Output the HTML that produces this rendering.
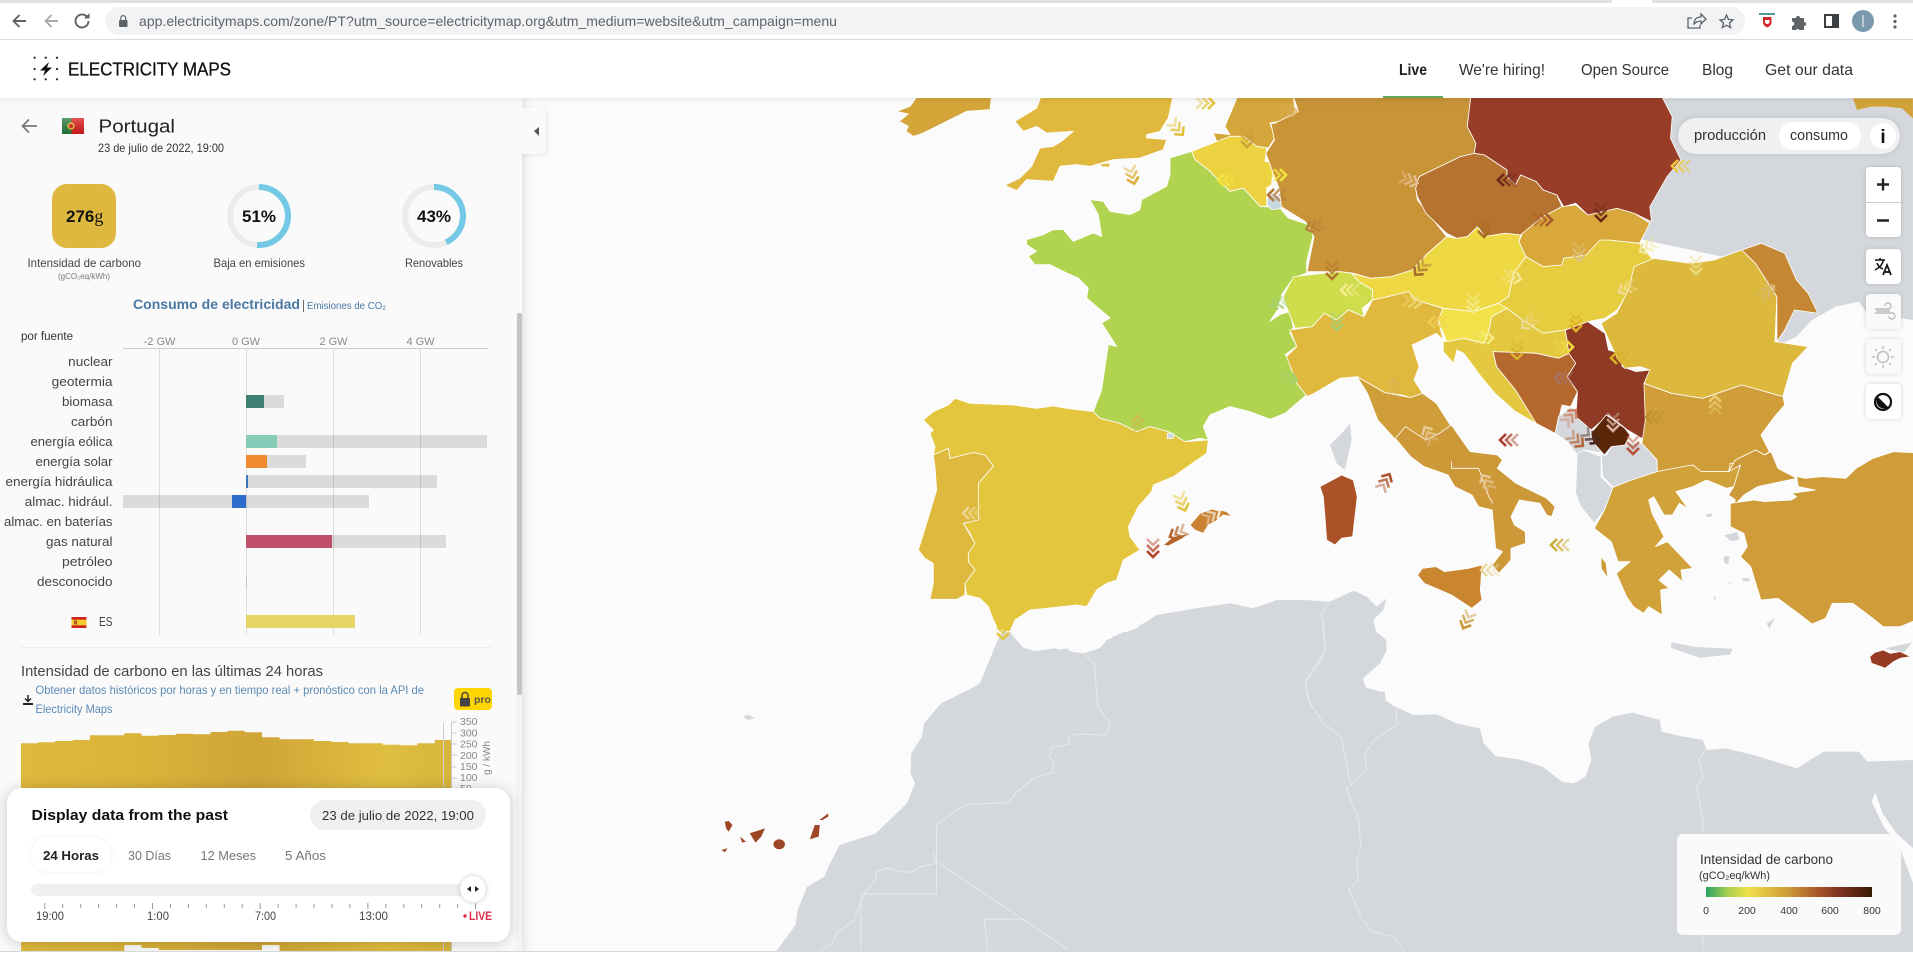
<!DOCTYPE html>
<html lang="es"><head><meta charset="utf-8"><title>Electricity Maps</title>
<style>
html,body{margin:0;padding:0;background:#fff;width:1913px;height:959px;overflow:hidden}
svg{position:absolute;left:0;top:0;display:block}
text{font-family:"Liberation Sans","DejaVu Sans",sans-serif;fill:#333}
polygon,polyline{vector-effect:non-scaling-stroke}
.c polygon{stroke:#fff;stroke-width:.8;stroke-linejoin:round}
.g{fill:#d4d8dc}
.b polyline{fill:none;stroke:#e6e9ec;stroke-width:1}
.lab{font-size:13px;fill:#444;text-anchor:end}
.ax{font-size:11px;fill:#888;text-anchor:middle}
.tk{font-size:10.5px;fill:#333;text-anchor:middle}
.gt{font-size:12px;fill:#444}
</style></head><body>
<svg width="1913" height="959" viewBox="0 0 1913 959" xmlns="http://www.w3.org/2000/svg">
<defs>
<clipPath id="mc"><rect x="0" y="98" width="1913" height="853"/></clipPath>
<g id="c" fill="none" stroke="currentColor" stroke-width="2.6"><path opacity=".45" d="M-6-9 0-3 6-9"/><path opacity=".75" d="M-6-3 0 3 6-3"/><path d="M-6 3 0 9 6 3"/></g>
<linearGradient id="chart" gradientUnits="userSpaceOnUse" x1="21" y1="0" x2="451" y2="0"><stop offset="0" stop-color="#dfb93d"/><stop offset=".3" stop-color="#d9b23a"/><stop offset=".55" stop-color="#cfa538"/><stop offset=".85" stop-color="#e0be40"/><stop offset="1" stop-color="#d8b53c"/></linearGradient>
<linearGradient id="leg" x1="0" x2="1" y1="0" y2="0"><stop offset="0" stop-color="#2aa364"/><stop offset=".13" stop-color="#a6cf50"/><stop offset=".25" stop-color="#f0e048"/><stop offset=".5" stop-color="#cc9a38"/><stop offset=".68" stop-color="#a9542a"/><stop offset=".8" stop-color="#7f3420"/><stop offset="1" stop-color="#3a1c05"/></linearGradient>
<linearGradient id="ptf" x1="0" x2="0" y1="0" y2="1"><stop offset="0" stop-color="#fff" stop-opacity=".25"/><stop offset="1" stop-color="#000" stop-opacity=".12"/></linearGradient>
</defs>

<!-- MAP -->
<rect x="520" y="98" width="1393" height="854" fill="#fbfbfb"/>
<g clip-path="url(#mc)">
<!-- grey land -->
<g transform="translate(700,620) scale(.3827,.3333)"><polygon class="g" points="795,30 820,50 850,90 880,93 910,88 935,90 960,85 970,97 1000,100 1030,97 1060,70 1080,50 1110,35 1130,38 1150,15 1175,0 1568,0 1568,1000 195,1000 250,915 255,870 280,800 325,770 340,730 365,675 460,640 500,595 540,550 562,490 550,460 552,400 580,350 585,310 630,250 735,190 760,130 780,60"/>
<polygon fill="#d4d8dc" points="112,288 130,285 142,295 125,300"/></g>
<g transform="translate(880,390) scale(.3333)"><polygon class="g" points="390,725 420,770 470,785 520,775 570,785 610,790 660,775 680,750 730,730 770,715 830,675 950,655 1050,640 1120,655 1190,630 1270,630 1350,635 1420,602 1460,620 1490,650 1520,625 1510,660 1480,690 1490,730 1520,760 1510,800 1450,860 1450,890 1500,905 1515,905 1520,960 170,960 300,880 345,770 360,735"/>
<polygon class="g" points="1390,125 1410,100 1415,150 1395,240 1370,220 1350,165"/></g>
<g transform="translate(1300,620) scale(.391,.3333)"><polygon class="g" points="0,0 187,0 190,30 220,60 222,90 205,130 160,175 170,205 205,230 240,258 290,285 350,283 400,310 460,325 470,370 500,408 560,418 620,440 670,485 700,490 730,470 745,420 738,370 755,320 800,290 850,278 920,300 925,335 980,350 1030,360 1040,390 1090,385 1160,405 1270,445 1340,395 1430,395 1450,425 1568,420 1568,1000 0,1000"/>
<polygon fill="#fbfbfb" points="1472,518 1462,545 1495,625 1530,670 1568,790 1568,685 1525,640 1490,580 1478,540"/></g>
<g transform="translate(1300,0) scale(.3909,.3333)"><polygon class="g" points="800,295 1568,295 1568,960 1450,940 1430,905 1370,920 1310,960 1270,1010 1225,1035 1200,800 800,700"/>
<polygon fill="#d2a23a" points="1415,295 1425,330 1460,320 1500,320 1540,325 1568,355 1568,295"/>
<polyline fill="none" stroke="#fbfbfb" stroke-width="1" points="1500,945 1530,960 1568,985"/></g>
<!-- African borders -->
<g class="b" transform="translate(700,620) scale(.3827,.3333)">
<polyline points="1003,100 1030,130 1035,200 1040,260 1072,312 1062,345 985,342 962,350 966,372 920,382 912,408 925,432 920,458 875,472 825,520 805,548 705,553 680,562 618,615 618,822 420,822 420,990"/>
<polyline points="618,725 965,992"/><polyline points="610,695 615,730 575,740 555,757 525,755 490,745 458,755 462,775 430,820 400,905 360,935 345,970 315,992"/>
<polyline points="743,898 850,898"/><polyline points="743,898 752,992"/></g>
<g class="b" transform="translate(880,390) scale(.3333)"><polyline points="1350,635 1325,670 1335,780 1325,810 1275,880 1295,955"/></g>
<g class="b" transform="translate(1300,620) scale(.391,.3333)">
<polyline points="60,0 65,90 15,180 20,240 60,310 105,350 130,495 118,505 150,600 155,680 145,730 150,780 125,810 160,900 185,935 240,950 265,992"/>
<polyline points="245,260 248,315 190,360 165,405 170,450 130,495"/>
<polyline points="1037,390 1020,420 1030,470 1015,505 1030,600 1030,992"/></g>

<!-- Western Europe -->
<g class="c" transform="translate(880,98) scale(.3333)">
<polygon fill="#d4a63a" points="115,-10 90,25 50,40 85,48 58,70 85,85 78,100 100,115 130,105 190,75 260,40 330,35 335,-10"/>
<polygon fill="#e0b83e" points="485,-10 470,30 405,70 430,100 470,85 500,105 580,100 545,130 520,145 480,150 455,205 420,240 375,262 410,278 440,245 520,250 540,205 590,200 630,205 700,185 780,180 850,155 860,125 800,120 800,110 840,100 865,60 880,-10"/>
<polygon fill="#e0b83e" points="660,198 690,195 688,208 665,206"/>
<polygon fill="#b0d44f" points="870,180 935,160 945,185 985,215 1050,280 1090,270 1140,325 1200,330 1225,360 1285,380 1300,410 1280,490 1280,525 1240,540 1205,590 1190,640 1170,670 1200,650 1230,640 1240,690 1230,705 1250,745 1215,770 1245,800 1240,830 1285,870 1275,895 1215,946 1170,964 1110,941 1050,926 990,951 970,986 985,1026 960,1021 915,1031 865,1001 810,986 770,1001 720,976 660,961 640,941 665,876 685,740 710,745 665,675 690,660 620,600 625,570 595,540 560,525 510,500 465,500 445,475 470,460 440,440 440,425 490,410 520,395 550,395 580,430 640,405 665,415 655,350 630,305 670,310 690,340 750,350 780,335 785,305 860,265 870,230"/>
<polygon fill="#d4a63c" points="1075,-10 1035,85 1050,110 1000,105 1010,130 1070,115 1090,115 1130,145 1165,150 1185,120 1170,75 1225,65 1245,40 1240,-10"/>
<polygon fill="#ecd141" points="935,160 1050,115 1090,115 1130,145 1160,150 1155,190 1180,195 1175,260 1160,270 1160,325 1140,325 1090,270 1050,280 985,215 945,185"/>
<polygon fill="#c8d6e0" points="1160,320 1165,285 1200,295 1205,332 1175,335"/>
</g>
<g class="c" transform="translate(880,390) scale(.3333)">
<polygon fill="#e4c53e" points="130,90 160,65 205,45 225,25 270,40 400,45 470,55 520,48 560,55 640,65 660,85 720,100 770,125 810,110 865,125 915,155 985,150 980,190 930,225 880,260 820,285 815,305 775,350 745,410 750,440 780,480 730,510 710,570 680,580 650,600 620,650 590,645 450,660 405,690 390,725 355,720 340,690 325,650 300,625 260,615 255,580 285,540 265,515 265,490 285,460 270,430 250,400 290,390 295,280 340,228 315,195 280,188 210,205 205,175 160,195 165,170 150,130 160,120"/>
<polygon fill="#dfb93d" points="160,195 205,175 210,205 280,188 315,195 340,228 295,280 295,390 250,400 285,460 265,490 265,515 285,540 255,580 255,615 230,628 150,628 160,580 160,520 135,505 115,480 140,400 170,300 165,230"/>
<polygon fill="#c88230" points="930,405 960,370 1000,355 1040,365 1057,380 1030,375 1005,395 985,405 970,430 945,420"/>
<polygon fill="#b4652d" points="850,465 880,440 930,430 900,450 865,468"/>
<polygon fill="#ab5229" points="1320,290 1385,255 1420,270 1432,320 1418,440 1385,445 1365,465 1340,450 1335,380 1330,320"/>
<polygon fill="#c8d6e0" points="862,130 880,130 880,145 862,145"/>
</g>
<!-- Central Europe -->
<g class="c" transform="translate(1240,100) scale(.3444,.3333)">
<polygon fill="#c99337" points="155,-10 170,35 100,70 90,70 100,120 75,160 115,270 120,320 190,365 215,410 195,515 290,515 330,520 380,535 440,530 500,510 540,465 600,410 515,300 510,265 520,230 640,170 680,160 685,130 660,80 670,-10"/>
<polygon fill="#983d27" points="670,-10 660,80 685,130 680,160 710,165 775,210 775,230 800,255 815,225 860,245 880,270 920,285 940,320 975,310 1010,345 1040,350 1095,325 1145,340 1195,365 1190,320 1240,230 1280,180 1250,115 1255,50 1225,-10"/>
<polygon fill="#b6722f" points="520,230 640,170 680,160 710,165 775,210 775,230 800,255 815,225 860,245 880,270 920,285 935,320 880,350 815,405 770,400 710,410 690,380 660,410 630,415 600,400 540,340 515,290 510,265"/>
<polygon fill="#d8a83b" points="935,320 975,315 1010,345 1095,325 1145,340 1190,370 1160,430 1070,420 1030,440 1005,465 940,475 935,495 880,500 830,470 810,425 820,400 880,350"/>
<polygon fill="#eed945" points="540,465 600,410 630,415 660,410 690,380 710,410 770,400 815,405 810,425 830,470 795,520 780,590 750,610 680,635 590,625 510,600 490,575 430,590 385,600 385,570 345,545 325,520 380,535 440,530 500,510"/>
<polygon fill="#cfdd4c" points="155,530 290,515 325,520 345,545 385,570 385,600 355,625 360,650 315,630 280,660 245,640 210,680 160,685 135,620 125,590"/>
<polygon fill="#e0b83d" points="145,690 210,680 245,640 280,660 315,630 360,650 385,600 430,590 490,575 510,600 590,625 575,660 590,720 570,700 500,735 520,800 505,840 530,880 495,893 470,885 420,878 340,830 290,835 215,880 195,890 165,850 135,770 165,740"/>
<polygon fill="#d09e38" points="340,830 420,878 495,893 530,880 570,910 610,975 640,1040 470,1040 400,960 370,880"/>
<polygon fill="#e6cd40" points="830,470 880,500 935,495 940,475 1005,465 1045,420 1070,420 1160,430 1200,480 1150,510 1125,580 1095,630 1060,655 1010,665 945,690 880,700 820,660 775,625 750,610 780,590 795,520"/>
<polygon fill="#e4c83f" points="775,625 820,660 880,700 945,690 955,760 925,775 860,760 735,755 745,800 800,870 860,970 800,935 740,880 700,830 650,760 630,750 620,790 590,755 590,725 650,715 710,730 725,680 730,650"/>
<polygon fill="#f2e148" points="590,625 680,635 750,610 775,625 730,650 725,680 710,730 650,715 600,725 575,660"/>
<polygon fill="#b5682e" points="735,755 860,760 925,775 955,760 975,790 950,830 980,875 960,920 935,915 915,1000 860,970 800,870 745,800"/>
</g>
<g class="c" transform="translate(1380,400) scale(.3401,.3333)">
<polygon class="g" fill="#d4d8dc" points="515,100 525,50 560,20 610,60 620,100 660,160 600,150 580,165 550,125"/>
<polygon fill="#d4d8dc" points="580,160 600,150 650,170 650,230 685,265 660,330 630,370 590,320 575,280"/>
<polygon fill="#d4d8dc" points="650,165 665,165 680,140 735,130 770,130 815,180 815,215 740,240 685,262 655,230"/>
</g>
<g class="c" transform="translate(1240,100) scale(.3444,.3333)">
<polygon fill="#8e3a24" points="945,690 1010,665 1060,700 1070,750 1105,760 1110,800 1150,815 1190,810 1185,850 1195,870 1175,1020 1125,990 1070,945 1020,990 975,950 980,875 950,830 975,790 955,760"/>
</g>
<g class="c" transform="translate(1300,0) scale(.3909,.3333)">
<polygon fill="#dcb83d" points="855,800 905,775 1000,790 1060,780 1130,750 1165,790 1220,890 1215,1025 1300,1040 1260,1090 1235,1190 1130,1155 1030,1195 950,1180 880,1150 895,1110 870,1100 830,1105 810,1070 770,970 810,940 840,870"/>
<polygon fill="#c58733" points="1130,750 1180,730 1240,760 1270,840 1300,880 1325,940 1265,930 1240,990 1220,1025 1220,890 1165,790"/>
</g>
<g class="c" transform="translate(1380,400) scale(.3401,.3333)">
<polygon fill="#d09e38" points="776,-50 856,-20 949,-5 1064,-45 1185,-10 1190,15 1160,50 1120,105 1145,155 1130,165 1105,150 1045,180 1025,215 945,215 920,195 815,215 815,180 770,130 780,60"/>
<polygon fill="#5b2508" points="620,100 665,45 720,85 735,105 720,135 680,140 660,165 625,125"/>
<polygon fill="#cd9838" points="45,115 75,80 105,100 135,120 175,100 210,75 265,155 345,165 360,180 345,205 400,250 490,295 515,320 505,350 490,345 470,310 410,300 385,350 395,375 427,395 428,430 385,445 385,480 350,520 330,495 360,455 340,445 330,330 290,320 270,285 220,260 200,225 130,200 90,170"/>
<polygon fill="#c9862f" points="110,525 125,505 165,500 190,515 260,505 300,495 295,570 300,600 270,625 210,585 165,565 130,550"/>
<polygon fill="#d1a23a" points="685,262 740,240 815,215 890,200 920,195 945,215 1025,215 1030,190 1060,195 1040,260 1020,265 960,240 920,260 870,275 905,325 880,310 860,345 835,345 805,290 790,300 800,340 835,410 810,440 845,425 920,505 885,510 890,545 850,510 820,540 850,565 825,570 830,645 790,620 775,640 745,620 725,590 695,520 735,485 700,485 680,425 630,385 660,330"/>
<polygon fill="#cc9a38" points="1045,180 1105,150 1130,165 1150,155 1170,205 1225,235 1110,260 1070,285 1030,330 1045,300 1025,285 1040,260 1060,195 1025,215"/>
<polygon fill="#cf9c39" points="1225,230 1250,235 1300,230 1370,235 1400,205 1450,175 1510,155 1600,160 1600,650 1530,680 1480,680 1430,640 1390,610 1330,610 1310,655 1270,672 1230,640 1210,625 1170,595 1120,600 1105,550 1090,500 1060,470 1080,440 1070,400 1030,380 1030,310 1100,300 1130,305 1210,300 1225,290 1210,280 1280,270 1230,260"/>
<polygon fill="#d4d8dc" stroke="none" points="855,725 930,740 1040,745 1030,765 940,775 855,745"/>
<polygon fill="#d4d8dc" points="1135,670 1165,650 1145,690"/>
<polygon fill="#d4d8dc" points="1010,405 1050,395 1060,420 1030,425"/>
<polygon fill="#d4d8dc" points="955,342 980,338 975,352 960,352"/>
<polygon fill="#d4d8dc" points="1008,470 1030,465 1025,495 1012,490"/>
<polygon fill="#d4d8dc" points="1018,550 1040,543 1030,553"/>
<polygon fill="#d4d8dc" points="1060,535 1085,532 1090,545 1068,545"/>
<polygon fill="#d4d8dc" points="978,592 990,585 985,608"/>
<polygon fill="#d4d8dc" points="1480,745 1568,725 1540,760 1500,750"/>
<polygon fill="#973b23" points="1440,770 1455,757 1480,750 1500,760 1530,755 1560,770 1530,775 1510,785 1485,805 1460,795 1445,790"/>
<polygon fill="#cd9838" points="650,470 665,490 670,535 650,505"/>
<polyline fill="none" stroke="#fff" stroke-width=".8" points="210,185 210,205 290,205 320,290 332,310"/>
</g>
<g transform="translate(700,620) scale(.3827,.3333)" fill="#9e4526">
<polygon points="65,605 75,603 85,615 75,635 68,625"/><polygon points="130,640 170,625 160,650 145,668"/><polygon points="105,650 120,665 110,668"/><circle cx="207" cy="673" r="15"/><polygon points="287,658 300,615 313,615 310,650"/><polygon points="312,600 335,580 335,590 320,600"/><polygon points="56,690 72,685 65,697"/>
</g>
<!-- chevrons -->
<use href="#c" transform="translate(1205 103) rotate(-90)" color="#e4c53e"/>
<use href="#c" transform="translate(1177 128) rotate(-40)" color="#e0c040"/>
<use href="#c" transform="translate(1132 175) rotate(-15)" color="#dcb23a"/>
<use href="#c" transform="translate(1247 138)" color="#c0903a" opacity=".7"/>
<use href="#c" transform="translate(1288 111) rotate(-90)" color="#e0b060" opacity=".7"/>
<use href="#c" transform="translate(1227 180) rotate(90)" color="#f2e640"/>
<use href="#c" transform="translate(1277 175) rotate(-90)" color="#f2e640"/>
<use href="#c" transform="translate(1277 195) rotate(90)" color="#b5773a"/>
<use href="#c" transform="translate(1315 226) rotate(70)" color="#b5803a"/>
<use href="#c" transform="translate(1332 270)" color="#b0782c"/>
<use href="#c" transform="translate(1350 290) rotate(90)" color="#f5ec90"/>
<use href="#c" transform="translate(1280 303) rotate(80)" color="#a6d070"/>
<use href="#c" transform="translate(1337 321)" color="#a6d070"/>
<use href="#c" transform="translate(1288 378) rotate(-75)" color="#a6d070"/>
<use href="#c" transform="translate(1393 388) rotate(180)" color="#d8b060" opacity=".6"/>
<use href="#c" transform="translate(1138 425) rotate(180)" color="#d8b04e" opacity=".7"/>
<use href="#c" transform="translate(972 513) rotate(90)" color="#eed690"/>
<use href="#c" transform="translate(1182 502) rotate(-20)" color="#e4c53e"/>
<use href="#c" transform="translate(1153 548)" color="#b4442a"/>
<use href="#c" transform="translate(1178 533) rotate(65)" color="#b4652d"/>
<use href="#c" transform="translate(1212 515) rotate(-120)" color="#fff" opacity=".8"/>
<use href="#c" transform="translate(1385 482) rotate(-150)" color="#ab5229"/>
<use href="#c" transform="translate(1003 630)" color="#e4c53e"/>
<use href="#c" transform="translate(1509 440) rotate(90)" color="#a83c2a"/>
<use href="#c" transform="translate(1560 545) rotate(90)" color="#ccad3a"/>
<use href="#c" transform="translate(1429 435) rotate(150)" color="#e8c898"/>
<use href="#c" transform="translate(1487 483) rotate(150)" color="#e8c898"/>
<use href="#c" transform="translate(1490 570) rotate(90)" color="#ecd8a0"/>
<use href="#c" transform="translate(1467 620) rotate(25)" color="#c99a3a"/>
<use href="#c" transform="translate(1655 417) rotate(90)" color="#b89030"/>
<use href="#c" transform="translate(1633 445)" color="#b5513a"/>
<use href="#c" transform="translate(1576 440) rotate(-50)" color="#b5683a"/>
<use href="#c" transform="translate(1591 437) rotate(-50)" color="#4a2a20"/>
<use href="#c" transform="translate(1570 417) rotate(-140)" color="#d08060"/>
<use href="#c" transform="translate(1613 422)" color="#d8b0a0"/>
<use href="#c" transform="translate(1715 405) rotate(180)" color="#e8cc70"/>
<use href="#c" transform="translate(1681 166) rotate(90)" color="#ecc83c"/>
<use href="#c" transform="translate(1409 180) rotate(-70)" color="#e4c090"/>
<use href="#c" transform="translate(1507 180) rotate(90)" color="#6a2a18"/>
<use href="#c" transform="translate(1543 220) rotate(-90)" color="#a8582c"/>
<use href="#c" transform="translate(1601 212)" color="#6a2a18"/>
<use href="#c" transform="translate(1484 228)" color="#a86e20"/>
<use href="#c" transform="translate(1421 268) rotate(40)" color="#a86e30"/>
<use href="#c" transform="translate(1579 252)" color="#e0c080"/>
<use href="#c" transform="translate(1648 247) rotate(60)" color="#f0e8a0"/>
<use href="#c" transform="translate(1696 265)" color="#ecd880"/>
<use href="#c" transform="translate(1627 288) rotate(65)" color="#f0dc90"/>
<use href="#c" transform="translate(1512 277) rotate(-75)" color="#f6e898"/>
<use href="#c" transform="translate(1412 302) rotate(-80)" color="#f0d870"/>
<use href="#c" transform="translate(1473 303)" color="#f6ee90"/>
<use href="#c" transform="translate(1438 322) rotate(90)" color="#eecc50"/>
<use href="#c" transform="translate(1529 322) rotate(50)" color="#ecd890"/>
<use href="#c" transform="translate(1576 322)" color="#e0b020"/>
<use href="#c" transform="translate(1484 338) rotate(-90)" color="#f6ec80"/>
<use href="#c" transform="translate(1517 350)" color="#d8b030"/>
<use href="#c" transform="translate(1564 347) rotate(-90)" color="#f0dc40"/>
<use href="#c" transform="translate(1620 358) rotate(90)" color="#d8b020"/>
<use href="#c" transform="translate(1564 378) rotate(90)" color="#a87060"/>
<use href="#c" transform="translate(1767 292) rotate(-130)" color="#d8b878"/>
</g>

<!-- LEFT PANEL -->
<rect x="0" y="98" width="522" height="854" fill="#fafafa" style="filter:drop-shadow(2px 0 5px rgba(0,0,0,.12))"/>
<rect x="520" y="108" width="26" height="46" rx="3" fill="#fafafa" style="filter:drop-shadow(1px 1px 2px rgba(0,0,0,.08))"/>
<rect x="510" y="108" width="14" height="46" fill="#fafafa"/>
<polygon points="534,131 539,127 539,136" fill="#555"/>
<rect x="517" y="313" width="5" height="382" fill="#c9c9c9" rx="2"/>
<rect x="516" y="313" width="6" height="639" fill="#000" opacity=".025"/>

<path d="M37 126H23M29 119.500 22.500 126 29 132.500" fill="none" stroke="#777" stroke-width="1.700"/>
<rect x="62" y="118" width="9.500" height="16" fill="#2d8040"/><rect x="71.500" y="118" width="12.500" height="16" fill="#e0201f"/>
<circle cx="71" cy="126" r="3.800" fill="#e6b83c"/><circle cx="71" cy="126" r="2" fill="#e0201f"/>
<rect x="62" y="118" width="22" height="16" fill="url(#ptf)"/>
<text x="98.500" y="132.500" font-size="18" textLength="76.500" lengthAdjust="spacingAndGlyphs" style="fill:#222">Portugal</text>
<text x="98" y="152" font-size="12" textLength="126" lengthAdjust="spacingAndGlyphs" style="fill:#333">23 de julio de 2022, 19:00</text>

<rect x="52" y="184" width="64" height="64" rx="15" fill="#deb83e"/>
<text x="66" y="222" font-size="17" font-weight="700" style="fill:#111">276<tspan font-weight="400" font-family="Liberation Serif" font-size="18">g</tspan></text>
<circle cx="259" cy="216" r="29" fill="none" stroke="#ececec" stroke-width="6"/>
<circle cx="259" cy="216" r="29" fill="none" stroke="#73c9e6" stroke-width="6" stroke-dasharray="92.900 182.300" transform="rotate(-90 259 216)"/>
<text x="259" y="222" font-size="17" font-weight="700" text-anchor="middle" style="fill:#111">51%</text>
<circle cx="434" cy="216" r="29" fill="none" stroke="#ececec" stroke-width="6"/>
<circle cx="434" cy="216" r="29" fill="none" stroke="#73c9e6" stroke-width="6" stroke-dasharray="78.400 182.300" transform="rotate(-90 434 216)"/>
<text x="434" y="222" font-size="17" font-weight="700" text-anchor="middle" style="fill:#111">43%</text>
<text x="27.500" y="267" font-size="12" textLength="113.500" lengthAdjust="spacingAndGlyphs" style="fill:#444">Intensidad de carbono</text>
<text x="58" y="279" font-size="8.500" textLength="52" lengthAdjust="spacingAndGlyphs" style="fill:#777">(gCO₂eq/kWh)</text>
<text x="213.500" y="267" font-size="12" textLength="91.500" lengthAdjust="spacingAndGlyphs" style="fill:#444">Baja en emisiones</text>
<text x="405" y="267" font-size="12" textLength="58" lengthAdjust="spacingAndGlyphs" style="fill:#444">Renovables</text>
<text x="133" y="309" font-size="14" font-weight="700" textLength="167" lengthAdjust="spacingAndGlyphs" style="fill:#4a78a4">Consumo de electricidad</text>
<rect x="303" y="300" width="1" height="12" fill="#666"/>
<text x="307" y="309" font-size="10.500" textLength="79" lengthAdjust="spacingAndGlyphs" style="fill:#4a78a4">Emisiones de CO₂</text>

<!-- bar chart -->
<text x="21" y="340" font-size="11.500" textLength="52" lengthAdjust="spacingAndGlyphs" style="fill:#333">por fuente</text>
<text class="ax" x="159.500" y="345">-2 GW</text><text class="ax" x="246" y="345">0 GW</text><text class="ax" x="333.500" y="345">2 GW</text><text class="ax" x="420.500" y="345">4 GW</text>
<rect x="123" y="348" width="365" height="1" fill="#ccc"/>
<g fill="#dedede"><rect x="159" y="349" width="1" height="286"/><rect x="246" y="349" width="1" height="286"/><rect x="333" y="349" width="1" height="286"/><rect x="420" y="349" width="1" height="286"/></g>
<g>
<text class="lab" x="112.500" y="366" textLength="44.300" lengthAdjust="spacingAndGlyphs">nuclear</text>
<text class="lab" x="112.500" y="386" textLength="60.800" lengthAdjust="spacingAndGlyphs">geotermia</text>
<text class="lab" x="112.500" y="406" textLength="50.500" lengthAdjust="spacingAndGlyphs">biomasa</text>
<text class="lab" x="112.500" y="426" textLength="41.500" lengthAdjust="spacingAndGlyphs">carbón</text>
<text class="lab" x="112.500" y="446" textLength="82" lengthAdjust="spacingAndGlyphs">energía eólica</text>
<text class="lab" x="112.500" y="466" textLength="77" lengthAdjust="spacingAndGlyphs">energía solar</text>
<text class="lab" x="112.500" y="486" textLength="107" lengthAdjust="spacingAndGlyphs">energía hidráulica</text>
<text class="lab" x="112.500" y="506" textLength="87.700" lengthAdjust="spacingAndGlyphs">almac. hidrául.</text>
<text class="lab" x="112.500" y="526" textLength="108.500" lengthAdjust="spacingAndGlyphs">almac. en baterías</text>
<text class="lab" x="112.500" y="546" textLength="66.500" lengthAdjust="spacingAndGlyphs">gas natural</text>
<text class="lab" x="112.500" y="566" textLength="50.500" lengthAdjust="spacingAndGlyphs">petróleo</text>
<text class="lab" x="112.500" y="586" textLength="75.500" lengthAdjust="spacingAndGlyphs">desconocido</text>
<text class="lab" x="112.500" y="626" textLength="13.500" lengthAdjust="spacingAndGlyphs">ES</text>
</g>
<g fill="#000" fill-opacity=".12">
<rect x="246" y="395" width="38" height="13"/><rect x="246" y="435" width="241" height="13"/><rect x="246" y="455" width="60" height="13"/><rect x="246" y="475" width="191" height="13"/><rect x="123" y="495" width="246" height="13"/><rect x="246" y="535" width="200" height="13"/><rect x="246" y="575" width="1" height="13"/>
</g>
<rect x="246" y="395" width="18" height="13" fill="#3d7f70"/>
<rect x="246" y="435" width="31" height="13" fill="#85cdb8"/>
<rect x="246" y="455" width="21" height="13" fill="#f08a30"/>
<rect x="246" y="475" width="2" height="13" fill="#3a76b8"/>
<rect x="232" y="495" width="14" height="13" fill="#2c6bc9"/>
<rect x="246" y="535" width="86" height="13" fill="#c0506a"/>
<rect x="246" y="615" width="109" height="13" fill="#e8d568"/>
<rect x="71.500" y="617" width="15" height="11" fill="#d0241c"/><rect x="71.500" y="619.700" width="15" height="5.600" fill="#f5cc2e"/><rect x="74" y="620.500" width="3" height="4" fill="#b5502a"/>
<rect x="20" y="647" width="472" height="1" fill="#eee"/>

<text x="21" y="676" font-size="15" textLength="302" lengthAdjust="spacingAndGlyphs" style="fill:#444">Intensidad de carbono en las últimas 24 horas</text>
<path d="M28 695v6M25 698.500l3 3 3-3" fill="none" stroke="#222" stroke-width="1.500"/><rect x="23" y="703" width="10" height="2" fill="#222"/>
<text x="35.500" y="694" font-size="12" textLength="388.500" lengthAdjust="spacingAndGlyphs" style="fill:#5b8ab5">Obtener datos históricos por horas y en tiempo real + pronóstico con la API de</text>
<text x="35.500" y="713" font-size="12" textLength="77" lengthAdjust="spacingAndGlyphs" style="fill:#5b8ab5">Electricity Maps</text>
<rect x="454" y="688" width="38" height="22" rx="4" fill="#ffd500"/>
<rect x="460" y="698" width="10" height="8.500" rx="1" fill="#444"/><path d="M462 698v-2.500a3 3 0 0 1 6 0v2.500" fill="none" stroke="#444" stroke-width="1.500"/>
<text x="474" y="703" font-size="10.500" font-weight="700" style="fill:#555">pro</text>

<path fill="url(#chart)" d="M21 952V743.300H37.900V742.300H55.100V741H72.700V740H89.900V735.300H124.300V733.300H141.500V735.700H158.700V735H176V733.700H193.200V734.300H210.400V732H227.600V730.700H244.800V732.300H262V737.300H279.600V739.300H314V741H331.300V742H348.500V743.300H382.900V744.700H400.100V745.300H417.400V743.300H434.600V740H451.400V952H279.600V945H262V950H158.700V948H141.500V945H124.300V952Z"/>
<rect x="443" y="723" width="1" height="229" fill="#ccc"/>
<path d="M451.500 722V952M451.500 722h5M451.500 733h5M451.500 744h5M451.500 755h5M451.500 767h5M451.500 778h5M451.500 789h5" fill="none" stroke="#ccc"/>
<g font-size="10.500">
<text x="460" y="725" style="fill:#888">350</text><text x="460" y="736.500" style="fill:#888">300</text><text x="460" y="747.500" style="fill:#888">250</text><text x="460" y="759" style="fill:#888">200</text><text x="460" y="770" style="fill:#888">150</text><text x="460" y="781" style="fill:#888">100</text><text x="460" y="792" style="fill:#888">50</text>
</g>
<text transform="translate(490 758) rotate(-90)" font-size="10" text-anchor="middle" style="fill:#888">g / kWh</text>

<!-- time card -->
<rect x="7" y="788" width="503" height="154" rx="15" fill="#fff" style="filter:drop-shadow(0 1px 7px rgba(0,0,0,.2))"/>
<text x="31.500" y="820" font-size="15" font-weight="700" textLength="196.500" lengthAdjust="spacingAndGlyphs" style="fill:#111">Display data from the past</text>
<rect x="310" y="800" width="176" height="30" rx="15" fill="#f0f0f0"/>
<text x="322" y="820" font-size="13" textLength="152" lengthAdjust="spacingAndGlyphs" style="fill:#333">23 de julio de 2022, 19:00</text>
<rect x="31" y="837" width="80" height="35" rx="17.500" fill="#fff" style="filter:drop-shadow(0 0 2px rgba(0,0,0,.08))"/>
<text x="43" y="860" font-size="13" font-weight="700" textLength="56" lengthAdjust="spacingAndGlyphs" style="fill:#222">24 Horas</text>
<text x="128" y="860" font-size="13" textLength="43" lengthAdjust="spacingAndGlyphs" style="fill:#777">30 Días</text>
<text x="200.500" y="860" font-size="13" textLength="55.500" lengthAdjust="spacingAndGlyphs" style="fill:#777">12 Meses</text>
<text x="285" y="860" font-size="13" textLength="41" lengthAdjust="spacingAndGlyphs" style="fill:#777">5 Años</text>
<rect x="31" y="884" width="440" height="12" rx="6" fill="#f0f0f0"/>
<circle cx="473" cy="889" r="13" fill="#fff" style="filter:drop-shadow(0 0 2px rgba(0,0,0,.25))"/>
<polygon points="467,889 471,886 471,892" fill="#222"/><polygon points="479,889 475,886 475,892" fill="#222"/>
<path d="M44.800 903v6M62.700 904v4M80.700 904v4M98.600 904v4M116.600 904v4M134.500 904v4M152.500 903v6M170.400 904v4M188.400 904v4M206.300 904v4M224.300 904v4M242.200 904v4M260.200 903v6M278.100 904v4M296.100 904v4M314 904v4M332 904v4M349.900 904v4M367.900 903v6M385.800 904v4M403.800 904v4M421.700 904v4M439.700 904v4M457.600 904v4M475.500 903v6" stroke="#999" fill="none"/>
<text class="gt" x="36" y="920" textLength="28" lengthAdjust="spacingAndGlyphs">19:00</text>
<text class="gt" x="147" y="920" textLength="22" lengthAdjust="spacingAndGlyphs">1:00</text>
<text class="gt" x="255" y="920" textLength="21" lengthAdjust="spacingAndGlyphs">7:00</text>
<text class="gt" x="359" y="920" textLength="29" lengthAdjust="spacingAndGlyphs">13:00</text>
<circle cx="465" cy="916" r="1.700" fill="#de2e4e"/>
<text x="469" y="920" font-size="11.500" font-weight="700" textLength="23" lengthAdjust="spacingAndGlyphs" style="fill:#de2e4e">LIVE</text>

<!-- map controls -->
<rect x="1678" y="118" width="222" height="36" rx="18" fill="#f0f0f0" style="filter:drop-shadow(0 0 3px rgba(0,0,0,.12))"/>
<text x="1694" y="140" font-size="14.500" textLength="72" lengthAdjust="spacingAndGlyphs" style="fill:#333">producción</text>
<rect x="1779" y="122" width="82" height="28" rx="14" fill="#fff"/>
<text x="1790" y="140" font-size="14.500" textLength="58" lengthAdjust="spacingAndGlyphs" style="fill:#333">consumo</text>
<circle cx="1883" cy="136" r="13" fill="#fff"/>
<text x="1883" y="143" font-size="19" font-weight="700" text-anchor="middle" style="fill:#111">i</text>

<g style="filter:drop-shadow(0 0 2px rgba(0,0,0,.15))" fill="#fff">
<rect x="1866" y="167" width="35" height="70" rx="4"/>
<rect x="1866" y="249" width="35" height="35" rx="4"/>
<rect x="1866" y="294" width="35" height="35" rx="4" fill="#fafafa"/>
<rect x="1866" y="339" width="35" height="35" rx="4" fill="#fafafa"/>
<rect x="1866" y="384" width="35" height="35" rx="4"/>
</g>
<rect x="1866" y="202" width="35" height="1" fill="#ccc"/>
<path d="M1877 184.500h12M1883 178.500v12M1877 220.500h12" stroke="#222" stroke-width="2.400" fill="none"/>
<g transform="translate(1875 258)" fill="none" stroke="#111" stroke-width="1.500">
<path d="M0 2h10M5 0v2M8.500 2C7.500 7 4 10 0 12M2 5c1 3 3 5 6 6"/><path d="M8 17l4-10 4 10M9.500 14h5" stroke-width="1.700"/>
</g>
<g fill="none" stroke="#bbb" stroke-width="1.400">
<path d="M1875 309h13a3 3 0 1 0-3-3M1875 313h17a3 3 0 1 1-3 3M1876 311h14"/>
<circle cx="1883" cy="357" r="5.500"/>
<path d="M1883 346v3M1883 365v3M1872 357h3M1891 357h3M1875 349l2 2M1889 363l2 2M1875 365l2-2M1889 351l2-2"/>
</g>
<circle cx="1883" cy="402" r="8" fill="#fff" stroke="#111" stroke-width="2.200"/><path d="M1877.500 396.500a8 8 0 0 0 11 11z" fill="#111"/><path d="M1881 396l8 8a6 6 0 0 0-8-8z" fill="#fff"/>

<!-- legend -->
<rect x="1677" y="834" width="224" height="101" rx="6" fill="#fafafa"/>
<text x="1700" y="864" font-size="13.500" textLength="133" lengthAdjust="spacingAndGlyphs" style="fill:#333">Intensidad de carbono</text>
<text x="1699" y="879" font-size="11" textLength="71" lengthAdjust="spacingAndGlyphs" style="fill:#333">(gCO₂eq/kWh)</text>
<rect x="1706" y="887" width="166" height="10" fill="url(#leg)"/>
<text class="tk" x="1706" y="914">0</text><text class="tk" x="1747" y="914">200</text><text class="tk" x="1789" y="914">400</text><text class="tk" x="1830" y="914">600</text><text class="tk" x="1872" y="914">800</text>

<!-- HEADER -->
<rect x="0" y="40" width="1913" height="58" fill="#fff" style="filter:drop-shadow(0 1px 3px rgba(0,0,0,.1))"/>
<rect x="1383" y="96" width="60" height="2" fill="#5fa85a"/>
<g fill="#222"><circle cx="34.600" cy="57.700" r="1.100"/><circle cx="45.700" cy="57.700" r="1.100"/><circle cx="57" cy="57.700" r="1.100"/><circle cx="34.600" cy="69" r="1.100"/><circle cx="57" cy="69" r="1.100"/><circle cx="34.600" cy="79.300" r="1.100"/><circle cx="45.700" cy="79.300" r="1.100"/><circle cx="57" cy="79.300" r="1.100"/></g>
<polygon points="49,62 40,70.500 45,70.500 43,76 52,67.500 47,67.500" fill="#111"/>
<text x="68" y="75.500" font-size="18" textLength="163" lengthAdjust="spacingAndGlyphs" style="fill:#111;stroke:#111;stroke-width:.3">ELECTRICITY MAPS</text>
<text x="1399" y="75" font-size="16" font-weight="700" textLength="28" lengthAdjust="spacingAndGlyphs" style="fill:#222">Live</text>
<text x="1459" y="75" font-size="16" textLength="86" lengthAdjust="spacingAndGlyphs" style="fill:#333">We're hiring!</text>
<text x="1581" y="75" font-size="16" textLength="88" lengthAdjust="spacingAndGlyphs" style="fill:#333">Open Source</text>
<text x="1702" y="75" font-size="16" textLength="31" lengthAdjust="spacingAndGlyphs" style="fill:#333">Blog</text>
<text x="1765" y="75" font-size="16" textLength="88" lengthAdjust="spacingAndGlyphs" style="fill:#333">Get our data</text>

<!-- BROWSER CHROME -->
<rect x="0" y="0" width="1913" height="39" fill="#fff"/>
<rect x="0" y="0" width="1913" height="3" fill="#dee1e6"/><rect x="1612" y="0" width="40" height="3" fill="#fff"/>
<rect x="0" y="39" width="1913" height="1" fill="#dadce0"/>
<rect x="105" y="7" width="1640" height="28" rx="14" fill="#f1f3f4"/>
<g fill="none" stroke="#5f6368" stroke-width="1.900">
<path d="M26 21H13.500M19.500 15l-6 6 6 6"/>
<path d="M58 21H45.500M51.500 15l-6 6 6 6" stroke="#a8abaf"/>
<path d="M88.500 21a6.500 6.500 0 1 1-2-4.700"/>
</g>
<polygon points="89.500,13 89.500,18.500 84,18.500" fill="#5f6368"/>
<rect x="119" y="20" width="8.500" height="7" rx="1" fill="#5f6368"/><path d="M120.800 20v-2a2.400 2.400 0 0 1 4.800 0v2" fill="none" stroke="#5f6368" stroke-width="1.200"/>
<text x="139" y="26" font-size="14" textLength="698" lengthAdjust="spacingAndGlyphs" style="fill:#5f6368">app.electricitymaps.com/zone/PT?utm_source=electricitymap.org&amp;utm_medium=website&amp;utm_campaign=menu</text>
<g fill="none" stroke="#5f6368" stroke-width="1.300">
<path d="M1692 18h-4v10h12v-3M1694 24c0-5 3-7 7-7v-3l5 5-5 5v-3c-3 0-5 1-7 3z"/>
<polygon points="1726.500,15 1728.400,19.400 1733,19.900 1729.500,23 1730.600,27.600 1726.500,25.200 1722.400,27.600 1723.500,23 1720,19.900 1724.600,19.400"/>
</g>
<rect x="1759" y="13" width="16" height="2" fill="#4e9a95"/>
<path d="M1763 17h8.500v5c0 3-2 4.500-4.250 5.500-2.250-1-4.250-2.500-4.250-5.500z" fill="#d3262f"/><path d="M1765 20h4.500v2a2.250 2 0 0 1-4.500 0z" fill="#fff"/>
<path d="M1792 18h4a2 2 0 0 1 4 0h4v4a2 2 0 0 1 0 4v4h-4.500a2 2 0 0 0-3.500 0H1792v-4a2 2 0 0 0 0-4.500z" fill="#5f6368"/>
<rect x="1825" y="15" width="13" height="12" fill="#fff" stroke="#3c4043" stroke-width="2"/><rect x="1832" y="15" width="6" height="12" fill="#3c4043"/>
<circle cx="1863" cy="21" r="11" fill="#7a99ad"/><rect x="1862.500" y="15" width="1" height="12" fill="#fff"/>
<circle cx="1895" cy="16" r="1.600" fill="#5f6368"/><circle cx="1895" cy="21.500" r="1.600" fill="#5f6368"/><circle cx="1895" cy="27" r="1.600" fill="#5f6368"/>

<!-- bottom strip -->
<rect x="0" y="952" width="1913" height="7" fill="#fff"/><rect x="0" y="951" width="1913" height="1" fill="#d6d8da"/>
</svg>
</body></html>
